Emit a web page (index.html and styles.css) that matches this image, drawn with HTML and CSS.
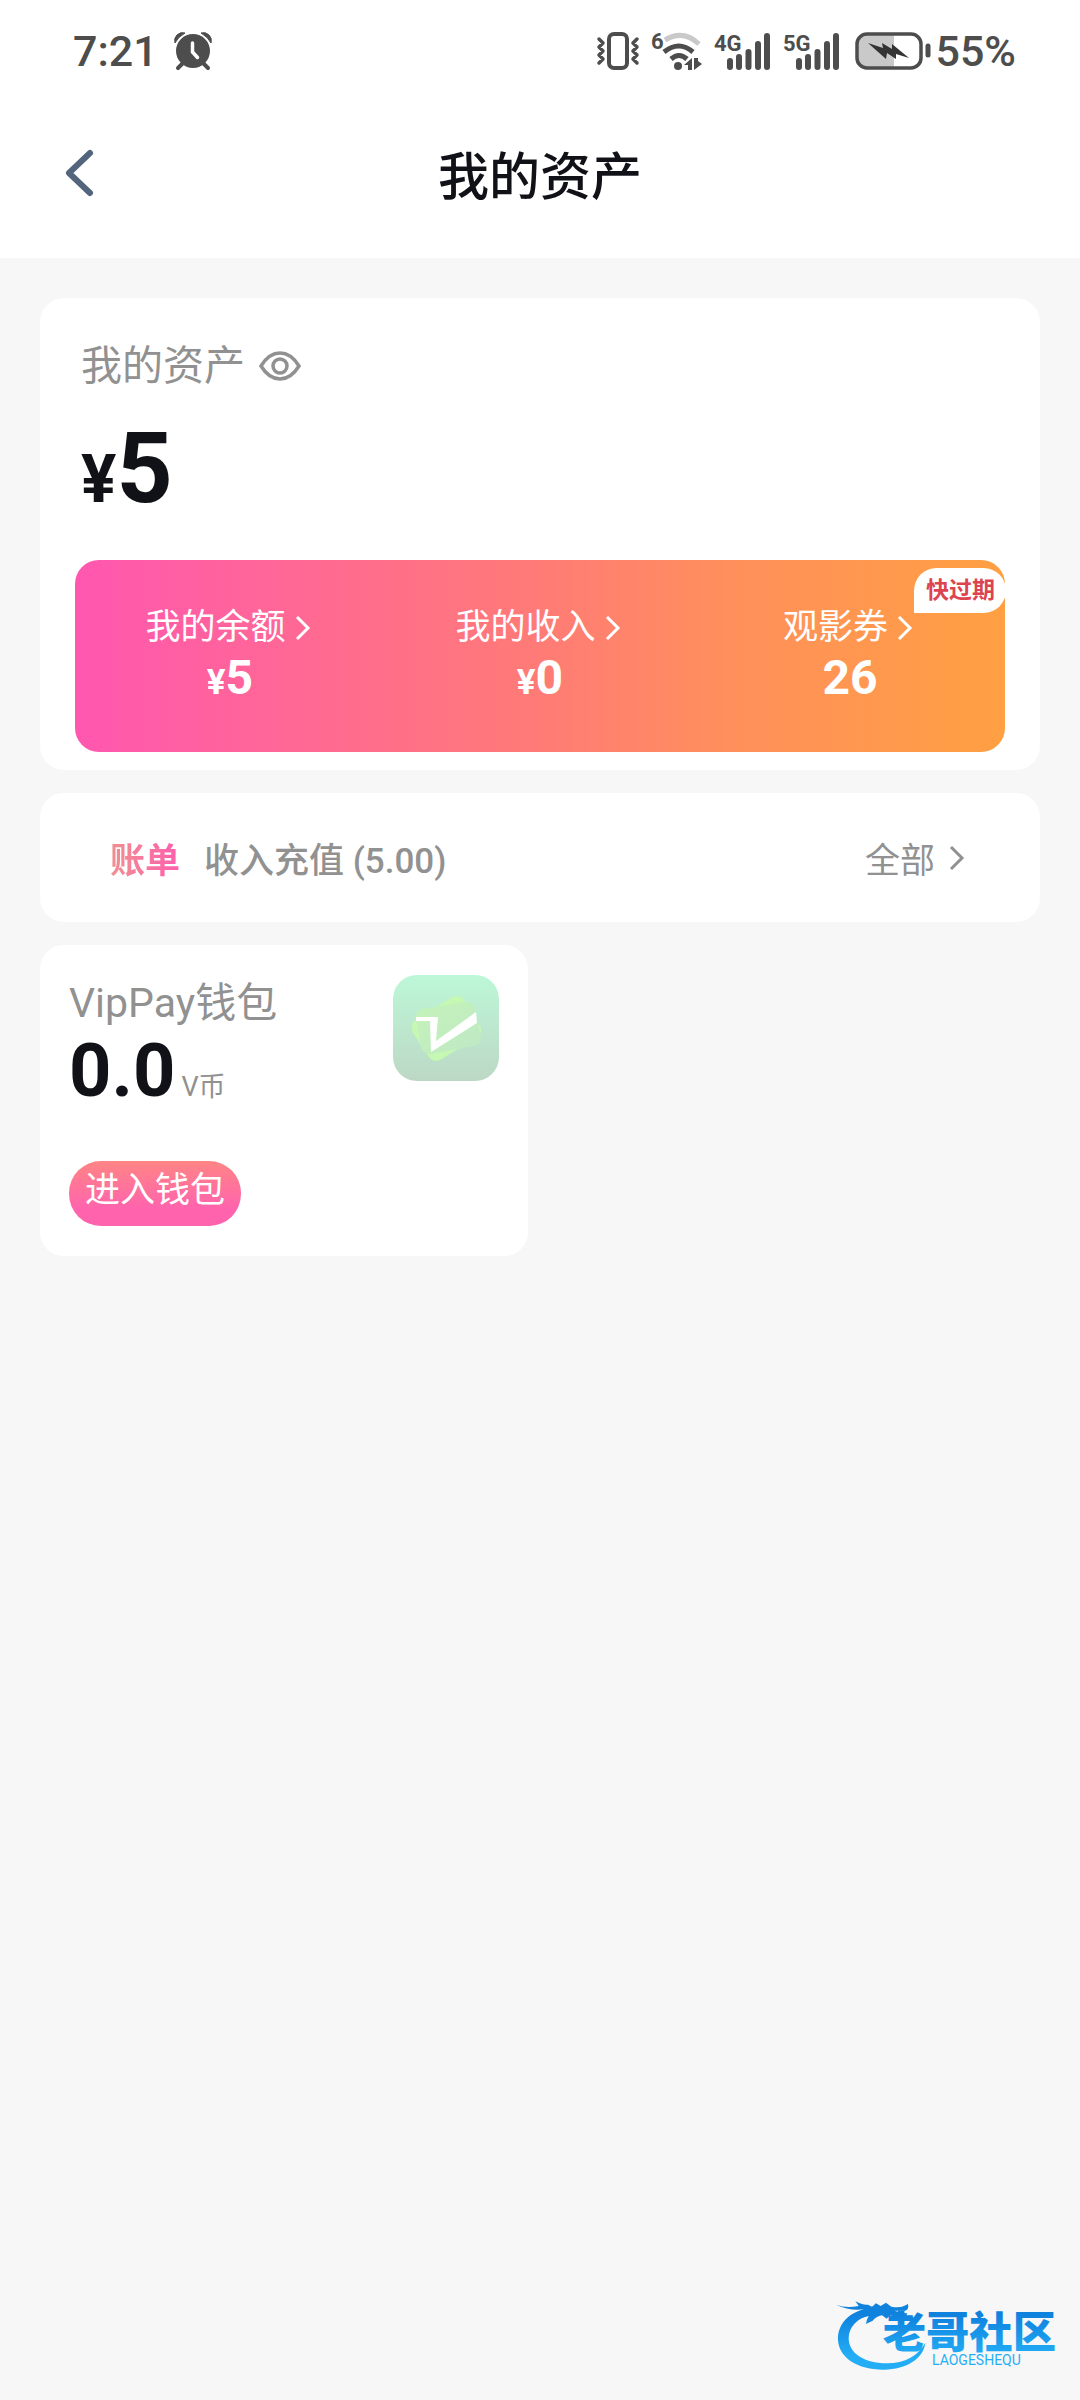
FILE: index.html
```html
<!DOCTYPE html>
<html lang="zh-CN">
<head>
    <meta charset="UTF-8">
    <meta name="viewport" content="width=device-width, initial-scale=1.0">
    <title>我的资产</title>
    <link rel="stylesheet" href="styles.css">
</head>
<body>

    <!-- 状态栏 -->
    <div class="status-bar">
        <span>7:21</span>
        <svg class="alarm" width="38" height="38" viewBox="0 0 38 38">
            <path d="M1 11A8 8 0 0 1 11 1Q4 5 1 11ZM37 11A8 8 0 0 0 27 1Q34 5 37 11Z" fill="currentColor" stroke="currentColor"/>
            <path d="M9 31l-5 5M29 31l5 5" stroke="currentColor" stroke-width="4" stroke-linecap="round"/>
            <circle cx="19" cy="19" r="17" fill="currentColor"/>
            <path d="M18.500 11v9l5 5.500" fill="none" stroke="#fff" stroke-width="3.500" stroke-linecap="round"/>
        </svg>
        <div class="status-icons">
            <svg width="44" height="38" viewBox="0 0 44 38">
                <rect x="13" y="2" width="18" height="34" rx="5" fill="none" stroke="currentColor" stroke-width="4"/>
                <path d="M3 7l4 4-4 4 4 4-4 4 4 4-4 4M41 7l-4 4 4 4-4 4 4 4-4 4 4 4" fill="none" stroke="currentColor" stroke-width="3.500" stroke-linejoin="round" stroke-linecap="round"/>
            </svg>
            <svg width="52" height="40" viewBox="0 0 52 40">
                <text class="net-label" x="0" y="18">6</text>
                <path d="M14 9Q32-2 48 13" fill="none" stroke="#c9c9c9" stroke-width="5"/>
                <path d="M13 21Q28 9 42 21" fill="none" stroke="currentColor" stroke-width="5"/>
                <path d="M20 28Q28 21 36 28" fill="none" stroke="currentColor" stroke-width="5"/>
                <circle cx="27" cy="35" r="4" fill="currentColor"/>
                <path d="M33 34l8-7v12h-4v-5zM51 33l-8 6V27h4v3z" fill="currentColor"/>
            </svg>
            <svg width="58" height="38" viewBox="0 0 58 38">
                <text class="net-label" x="0" y="19">4G</text>
                <path d="M16 29v6M25 25v10M34.500 20v15M44 12v23M53 4v31" stroke="currentColor" stroke-width="6" stroke-linecap="round"/>
            </svg>
            <svg width="58" height="38" viewBox="0 0 58 38">
                <text class="net-label" x="0" y="19">5G</text>
                <path d="M16 29v6M25 25v10M34.500 20v15M44 12v23M53 4v31" stroke="currentColor" stroke-width="6" stroke-linecap="round"/>
            </svg>
            <svg class="battery" width="76" height="38" viewBox="0 0 76 38">
                <path d="M11 2H39V36H11Q2 36 2 27V11Q2 2 11 2Z" fill="#c9c9c9"/>
                <rect x="2" y="2" width="64" height="34" rx="10" fill="none" stroke="currentColor" stroke-width="3.500"/>
                <path d="M73 14v9" stroke="currentColor" stroke-width="5" stroke-linecap="round"/>
                <path d="M13 11l15 5-1-5 10 6 0-5 17 14-13-4 0 5-9-6-1 6z" fill="#333"/>
            </svg>
        </div>
        <span>55%</span>
    </div>

    <header class="nav">
        <button class="back" type="button" aria-label="返回">
            <svg width="30" height="48" viewBox="0 0 30 48"><path d="M26 4L5 24l21 20" fill="none" stroke="currentColor" stroke-width="6" stroke-linecap="round" stroke-linejoin="round"/></svg>
        </button>
        <h1>我的资产</h1>
    </header>

    <main>
        <!-- 资产总览 -->
        <section class="card assets">
            <div class="assets-title">
                <h2>我的资产</h2>
                <button class="eye" type="button" aria-label="显示或隐藏金额">
                    <svg width="42" height="30" viewBox="0 0 42 30">
                        <path d="M2 15Q10 2 21 2T40 15Q32 28 21 28T2 15Z" fill="none" stroke="currentColor" stroke-width="3.500"/>
                        <circle cx="21" cy="15" r="7" fill="none" stroke="currentColor" stroke-width="3.500"/>
                    </svg>
                </button>
            </div>
            <p class="total"><span class="yen">¥</span>5</p>
            <div class="account">
                <a class="account-item" href="#">
                    <span class="account-label">我的余额<svg class="arrow" width="16" height="26" viewBox="0 0 16 26"><path d="M2 2l11 11L2 24" fill="none" stroke="currentColor" stroke-width="3"/></svg></span>
                    <span class="account-value"><span class="yen">¥</span>5</span>
                </a>
                <a class="account-item" href="#">
                    <span class="account-label">我的收入<svg class="arrow" width="16" height="26" viewBox="0 0 16 26"><path d="M2 2l11 11L2 24" fill="none" stroke="currentColor" stroke-width="3"/></svg></span>
                    <span class="account-value"><span class="yen">¥</span>0</span>
                </a>
                <a class="account-item" href="#">
                    <span class="account-label">观影券<svg class="arrow" width="16" height="26" viewBox="0 0 16 26"><path d="M2 2l11 11L2 24" fill="none" stroke="currentColor" stroke-width="3"/></svg></span>
                    <span class="account-value">26</span>
                </a>
                <span class="badge">快过期</span>
            </div>
        </section>

        <!-- 账单 -->
        <section class="card bill">
            <h2 class="bill-title">账单</h2>
            <span class="bill-text">收入充值 (5.00)</span>
            <a class="bill-all" href="#">全部<svg width="16" height="26" viewBox="0 0 16 26"><path d="M2 2l11 11L2 24" fill="none" stroke="currentColor" stroke-width="3"/></svg></a>
        </section>

        <!-- 钱包 -->
        <div class="wallets">
            <section class="card wallet">
                <div class="wallet-top">
                    <div>
                        <h2>VipPay钱包</h2>
                        <p class="coin">0.0<span>V币</span></p>
                    </div>
                    <svg width="106" height="106" viewBox="0 0 106 106">
                        <defs>
                            <linearGradient id="iconBg" x1="0" y1="0" x2="0" y2="1">
                                <stop offset="0" stop-color="#bdf7d8"/>
                                <stop offset="1" stop-color="#bcd8c4"/>
                            </linearGradient>
                            <linearGradient id="iconCard" x1="0" y1="0" x2="1" y2="1">
                                <stop offset="0" stop-color="#c4f3b8"/>
                                <stop offset="1" stop-color="#bfe8c6"/>
                            </linearGradient>
                        </defs>
                        <rect width="106" height="106" rx="24" fill="url(#iconBg)"/>
                        <path d="M21 46L58 23Q66 18 71 25L87 51Q90 57 85 61L49 84Q41 89 36 82L20 58Q17 51 21 46Z" fill="#c5f8b2"/>
                        <path d="M29 34L73 27Q80 26 82 33L88 62Q88 70 81 71L37 79Q30 79 28 72L23 42Q23 36 29 34Z" fill="url(#iconCard)"/>
                        <path d="M23 42H45L43 66L83 37L84 48L38 77L37 46H23Z" fill="#fff"/>
                    </svg>
                </div>
                <button class="enter" type="button">进入钱包</button>
            </section>
        </div>
    </main>

    <svg class="watermark" width="226" height="80" viewBox="54 46 678 240">
        <defs>
            <linearGradient id="blue" gradientUnits="userSpaceOnUse" x1="0" y1="70" x2="0" y2="270">
                <stop offset="0.200" stop-color="#0f82de"/>
                <stop offset="0.800" stop-color="#22adf5"/>
            </linearGradient>
        </defs>
        <g fill="url(#blue)">
            <path d="M152 88C88 100 58 140 60 185C64 240 122 274 198 273C266 271 316 240 322 192C302 230 262 254 206 254C138 253 92 224 92 178C92 146 116 118 160 108Z"/>
            <path d="M54 78Q84 90 122 82L112 67Q134 80 150 78L162 84L174 74L188 82L204 72L220 84Q244 88 258 82L270 76Q274 92 262 96L230 96Q246 104 268 104L262 118Q240 120 218 108L206 120L192 110Q174 114 164 126L144 136Q146 122 152 112Q132 116 114 124Q118 102 138 92Q96 98 54 78Z"/>
            <text class="mark-name" x="194" y="208">老哥社区</text>
            <text class="mark-sub" x="342" y="260">LAOGESHEQU</text>
        </g>
    </svg>

</body>
</html>
```
FILE: styles.css
```css
* {
    box-sizing: border-box;
}

body {
    position: relative;
    min-height: 100vh;
    margin: 0;
    background-color: #f7f7f7;
    color: #111118;
    font-family: Roboto, "Noto Sans CJK SC", sans-serif;
    font-size: 35px;
}

h1, h2, p {
    margin: 0;
    font-weight: 400;
}

button {
    padding: 0;
    border: none;
    background: none;
    color: inherit;
    font: inherit;
    cursor: pointer;
}

a {
    color: inherit;
    text-decoration: none;
}

svg {
    display: block;
    flex-shrink: 0;
    overflow: visible;
}

/* 状态栏 */
.status-bar {
    display: flex;
    align-items: center;
    height: 92px;
    padding: 10px 64px 0 73px;
    background-color: #fff;
    color: #4d4d4d;
    font-size: 43px;
    font-weight: 500;
}

.alarm {
    margin-left: 16px;
}

.status-icons {
    display: flex;
    align-items: center;
    gap: 11px;
    margin-left: auto;
    margin-right: 4px;
}

.battery {
    margin-left: 3px;
}

.net-label {
    fill: currentColor;
    font-size: 22px;
    font-weight: 700;
}

/* 标题栏 */
.nav {
    display: grid;
    grid-template-columns: 1fr auto 1fr;
    align-items: center;
    height: 166px;
    padding: 0 64px 4px;
    background-color: #fff;
}

.nav h1 {
    font-size: 51px;
    font-weight: 500;
}

.back {
    justify-self: start;
    color: #53657d;
}

main {
    display: flex;
    flex-direction: column;
    gap: 23px;
    padding: 40px;
}

.card {
    border-radius: 24px;
    background-color: #fff;
}

.card h2 {
    font-size: 41px;
    line-height: 64px;
    color: #919191;
}

/* 资产总览 */
.assets {
    padding: 36px 35px 18px;
}

.assets-title {
    display: flex;
    align-items: center;
    gap: 14px;
    padding-left: 6px;
}

.eye {
    color: #919191;
}

.yen {
    line-height: 1;
}

.total {
    margin: 20px 0 40px;
    padding-left: 6px;
    font-size: 98px;
    font-weight: 700;
    line-height: 102px;
}

.total .yen {
    font-size: 66px;
}

.account {
    position: relative;
    display: grid;
    grid-template-columns: repeat(3, 1fr);
    padding: 43px 0 49px;
    border-radius: 24px;
    overflow: hidden;
    background: linear-gradient(90deg, #ff57b0, #ff7b76 50%, #ff8f5c 70%, #ffa042);
    color: #fff;
}

.account-item {
    display: flex;
    flex-direction: column;
    align-items: center;
}

.account-label {
    display: flex;
    align-items: center;
    gap: 9px;
    padding-right: 4px;
    line-height: 50px;
}

.account-value {
    font-size: 48px;
    font-weight: 700;
    line-height: 50px;
}

.account-value .yen {
    font-size: 35px;
}

.badge {
    position: absolute;
    top: 8px;
    right: -1px;
    padding: 0 11px 0 12px;
    border-radius: 24px 24px 24px 0;
    background-color: #fff;
    color: #dc4450;
    font-size: 23px;
    font-weight: 700;
    line-height: 45px;
}

/* 账单 */
.bill {
    display: flex;
    align-items: center;
    padding: 39px 75px 39px 70px;
    color: #919191;
}

.card .bill-title {
    background: linear-gradient(90deg, #f09090, #ff5fae);
    background-clip: text;
    -webkit-background-clip: text;
    color: transparent;
    font-size: 35px;
    font-weight: 700;
    line-height: normal;
}

.bill-text {
    margin-left: 24px;
    font-weight: 500;
}

.bill-all {
    display: flex;
    align-items: center;
    gap: 14px;
    margin-left: auto;
}

/* 钱包 */
.wallets {
    display: grid;
    grid-template-columns: 1fr 1fr;
    gap: 24px;
}

.wallet {
    padding: 30px 29px;
}

.wallet-top {
    display: flex;
    justify-content: space-between;
    align-items: flex-start;
}

.card.wallet h2 {
    line-height: 56px;
}

.coin {
    font-size: 74px;
    font-weight: 700;
    line-height: 80px;
}

.coin span {
    margin-left: 6px;
    color: #919191;
    font-size: 27px;
    font-weight: 400;
    line-height: 1;
}

.enter {
    margin-top: 50px;
    padding: 0 16px 6px;
    border-radius: 32px;
    background: linear-gradient(#ff8585, #ff63ae 75%);
    color: #fff;
    line-height: 59px;
}

/* 右下角水印 */
.watermark {
    position: absolute;
    right: 18px;
    bottom: 26px;
}

.mark-name {
    font-size: 130px;
    font-weight: 900;
}

.mark-sub {
    font-size: 42px;
}
```
